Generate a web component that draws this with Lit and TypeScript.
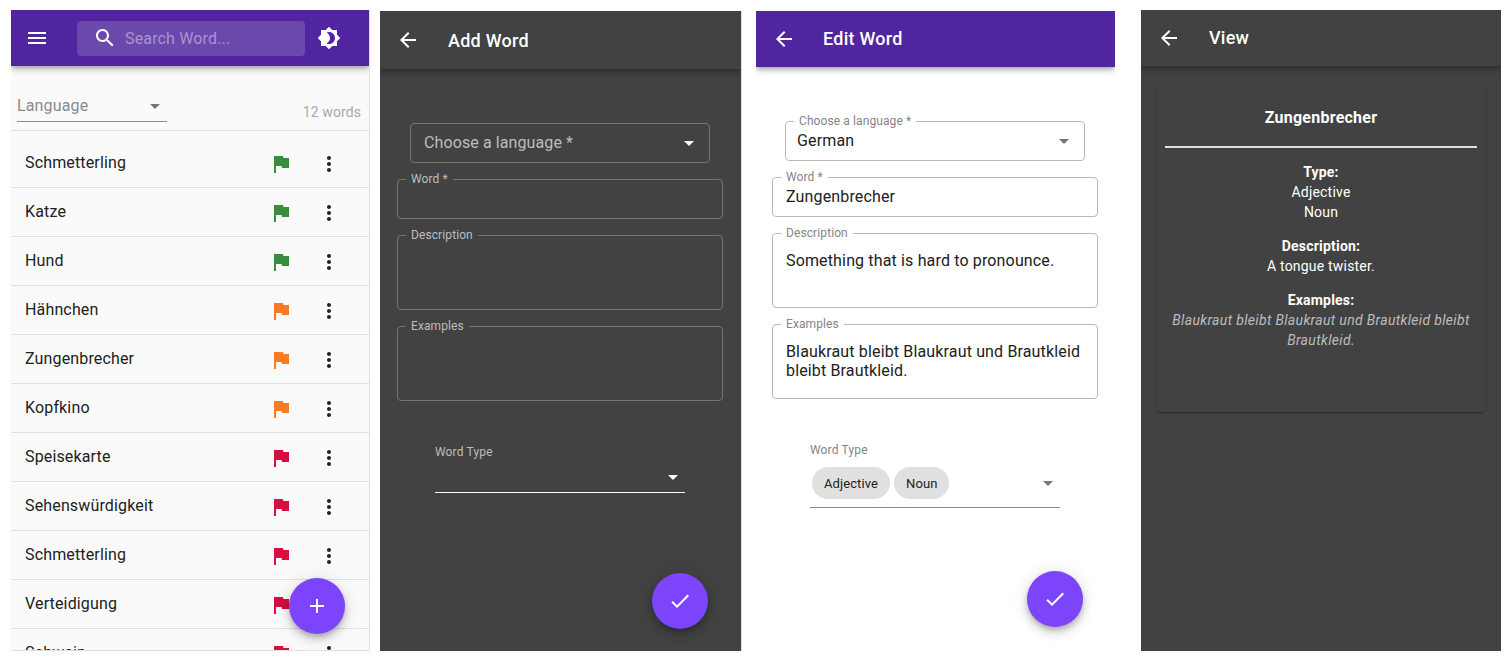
import { LitElement, html, css, svg } from 'lit';
import { customElement } from 'lit/decorators.js';

const icon = (d: unknown, cls = '') => html`<svg class="icon ${cls}" viewBox="0 0 24 24">${svg`<path d=${d as string}></path>`}</svg>`;

const MENU = 'M3 18h18v-2H3v2zm0-5h18v-2H3v2zm0-7v2h18V6H3z';
const SEARCH = 'M15.5 14h-.79l-.28-.27C15.41 12.59 16 11.11 16 9.5 16 5.91 13.09 3 9.5 3S3 5.91 3 9.5 5.91 16 9.5 16c1.61 0 3.09-.59 4.23-1.57l.27.28v.79l5 4.99L20.49 19l-4.99-5zm-6 0C7.01 14 5 11.99 5 9.5S7.01 5 9.5 5 14 7.01 14 9.5 11.99 14 9.5 14z';
const BRIGHTNESS = 'M20 8.69V4h-4.69L12 .69 8.69 4H4v4.69L.69 12 4 15.31V20h4.69L12 23.31 15.31 20H20v-4.69L23.31 12 20 8.69zM12 18c-.89 0-1.74-.2-2.5-.55C11.56 16.5 13 14.42 13 12s-1.44-4.5-3.5-5.45C10.26 6.2 11.11 6 12 6c3.31 0 6 2.69 6 6s-2.69 6-6 6z';
const BACK = 'M20 11H7.83l5.59-5.59L12 4l-8 8 8 8 1.41-1.41L7.83 13H20v-2z';
const FLAG = 'M14.4 6L14 4H5v17h2v-7h5.6l.4 2h7V6z';
const MORE = 'M12 8c1.1 0 2-.9 2-2s-.9-2-2-2-2 .9-2 2 .9 2 2 2zm0 2c-1.1 0-2 .9-2 2s.9 2 2 2 2-.9 2-2-.9-2-2-2zm0 6c-1.1 0-2 .9-2 2s.9 2 2 2 2-.9 2-2-.9-2-2-2z';
const CHECK = 'M9 16.17L4.83 12l-1.42 1.41L9 19 21 7l-1.41-1.41z';
const ADD = 'M19 13h-6v6h-2v-6H5v-2h6V5h2v6h6v2z';
const ARROW = 'M7 10l5 5 5-5z';

const WORDS: [string, string][] = [
  ['Schmetterling', 'green'],
  ['Katze', 'green'],
  ['Hund', 'green'],
  ['Hähnchen', 'orange'],
  ['Zungenbrecher', 'orange'],
  ['Kopfkino', 'orange'],
  ['Speisekarte', 'red'],
  ['Sehenswürdigkeit', 'red'],
  ['Schmetterling', 'red'],
  ['Verteidigung', 'red'],
  ['Schwein', 'red'],
];

@customElement('app-root')
export class AppRoot extends LitElement {
  static styles = css`
    :host {
      display: block;
      height: 660px;
      overflow: hidden;
      background: #fff;
      font-family: Roboto, sans-serif;
      color: #212121;
      letter-spacing: .15px;
    }
    .page {
      display: flex;
      align-items: flex-start;
      padding: 10px 0 0 11px;
    }
    .panel {
      position: relative;
      overflow: hidden;
      flex: none;
      height: 641px;
      --bg: #fff;
      background: var(--bg);
    }
    .dark {
      --bg: #424242;
      color: #fff;
    }
    .list-panel {
      width: 359px;
      --bg: #fafafa;
      border-right: 1px solid #e0e0e0;
      border-bottom: 1px solid #e0e0e0;
      box-sizing: border-box;
    }
    .add-panel {
      width: 362px;
      height: 640px;
      margin: 1px 0 0 10px;
      border-right: 1px solid #e0e0e0;
      box-sizing: border-box;
    }
    .edit-panel {
      width: 359px;
      height: 640px;
      margin: 1px 0 0 14px;
    }
    .view-panel {
      width: 360px;
      margin-left: 26px;
    }
    .icon {
      display: block;
      width: 24px;
      height: 24px;
      flex: none;
      fill: currentColor;
    }

    header {
      position: relative;
      display: flex;
      align-items: center;
      height: 56px;
      color: #fff;
      background: #50259f;
      box-shadow: 0 2px 4px -1px rgba(0, 0, 0, .2), 0 4px 5px 0 rgba(0, 0, 0, .14), 0 1px 10px 0 rgba(0, 0, 0, .12);
    }
    .dark header {
      background: #424242;
    }
    .add-panel header {
      height: 58px;
    }
    .back {
      margin-left: 16px;
    }
    .title {
      margin-left: 28px;
      font-size: 18px;
      font-weight: 500;
      letter-spacing: .25px;
    }
    .edit-panel .title {
      margin-left: 27px;
      padding-bottom: 2px;
    }
    .view-panel .title {
      padding-bottom: 2px;
    }

    .menu {
      margin-left: 14px;
    }
    .search {
      display: flex;
      align-items: center;
      width: 228px;
      height: 35px;
      margin-left: 28px;
      border-radius: 4px;
      background: #6b48ac;
      color: #a795cf;
      font-size: 16px;
    }
    .search .icon {
      margin: 0 8px 0 16px;
      color: #fff;
    }
    .theme {
      margin-left: 12px;
    }

    .filter {
      display: flex;
      justify-content: space-between;
      align-items: flex-end;
      height: 65px;
      padding: 0 8px 0 6px;
      border-bottom: 1px solid #e0e0e0;
      box-sizing: border-box;
    }
    .language {
      display: flex;
      justify-content: space-between;
      align-items: center;
      width: 150px;
      height: 32px;
      margin-bottom: 8px;
      border-bottom: 1px solid #8a8a8a;
      box-sizing: border-box;
      font-size: 16px;
      color: #8a8a8a;
    }
    .language .icon,
    .arrow {
      color: #757575;
    }
    .count {
      margin-bottom: 10px;
      font-size: 14px;
      letter-spacing: .1px;
      color: #a8a8a8;
    }
    .list {
      padding-top: 8px;
    }
    .row {
      display: flex;
      align-items: center;
      height: 48px;
      padding: 0 9px 0 14px;
      border-bottom: 1px solid #e0e0e0;
      font-size: 16px;
    }
    .word {
      flex: 1;
      padding-bottom: 2px;
    }
    .row .icon {
      margin-top: 1px;
    }
    .flag {
      margin-right: 24px;
    }
    .green {
      color: #388e3c;
    }
    .orange {
      color: #fb7a26;
    }
    .red {
      color: #d50f3e;
    }
    .more {
      margin-right: 19px;
    }

    .fab {
      position: absolute;
      display: flex;
      align-items: center;
      justify-content: center;
      width: 56px;
      height: 56px;
      border-radius: 50%;
      color: #fff;
      background: #7c44fb;
      box-shadow: 0 3px 5px -1px rgba(0, 0, 0, .2), 0 6px 10px 0 rgba(0, 0, 0, .14), 0 1px 18px 0 rgba(0, 0, 0, .12);
    }
    .list-panel .fab {
      left: 278px;
      top: 568px;
    }
    .add-panel .fab {
      left: 272px;
      top: 562px;
    }
    .edit-panel .fab {
      left: 271px;
      top: 560px;
    }

    .form {
      display: flex;
      flex-direction: column;
      align-items: flex-start;
      gap: 16px;
      padding: 54px 0 0 17px;
    }
    .edit-panel .form {
      padding-left: 16px;
    }
    .field {
      position: relative;
      box-sizing: border-box;
      width: 326px;
      height: 40px;
      padding: 9px 13px;
      border: 1px solid #b9b9b9;
      border-radius: 4px;
      font-size: 16px;
      line-height: 20px;
    }
    .dark .field {
      border-color: #757575;
    }
    .tall {
      height: 75px;
      padding-top: 17px;
      line-height: 19px;
    }
    .legend {
      position: absolute;
      left: 8px;
      top: -8px;
      padding: 0 5px;
      background: var(--bg);
      font-size: 12px;
      line-height: 14px;
      letter-spacing: .1px;
      color: #858585;
    }
    .dark .legend {
      color: #bdbdbd;
    }
    .select {
      display: flex;
      justify-content: space-between;
      align-items: center;
      width: 300px;
      margin-left: 13px;
      padding: 0 8px 0 13px;
    }
    .dark .select {
      color: #bdbdbd;
      letter-spacing: .1px;
    }
    .dark .select .icon {
      color: #fff;
    }
    .edit-panel .select {
      padding-left: 11px;
    }
    .type {
      width: 250px;
      margin: 28px 0 0 38px;
    }
    .type-label {
      font-size: 12px;
      line-height: 14px;
      color: #858585;
    }
    .dark .type-label {
      color: #bdbdbd;
    }
    .type-input {
      display: flex;
      align-items: center;
      gap: 4px;
      box-sizing: border-box;
      height: 34px;
      padding: 2px 0 0 2px;
      border-bottom: 1px solid #fff;
    }
    .edit-panel .type-input {
      height: 51px;
      padding: 10px 0 8px 2px;
      border-color: #8a8a8a;
    }
    .type-input .icon {
      margin-left: auto;
    }
    .dark .type-input .icon {
      color: #fff;
    }
    .chip {
      display: flex;
      align-items: center;
      height: 32px;
      padding: 0 12px;
      border-radius: 16px;
      background: #e0e0e0;
      font-size: 13px;
      letter-spacing: .1px;
    }

    .card {
      height: 329px;
      margin: 17px 16px 0;
      padding: 0 8px;
      box-sizing: border-box;
      border-radius: 4px;
      text-align: center;
      font-size: 14px;
      line-height: 20px;
      letter-spacing: .2px;
      box-shadow: 0 2px 1px -1px rgba(0, 0, 0, .2), 0 1px 1px 0 rgba(0, 0, 0, .14), 0 1px 3px 0 rgba(0, 0, 0, .12);
    }
    .card h2 {
      margin: 0;
      padding: 24px 0 18px;
      border-bottom: 2px solid #e0e0e0;
      font-size: 16px;
      line-height: 21px;
      font-weight: 700;
      letter-spacing: .25px;
    }
    .section {
      margin-top: 14px;
    }
    .section b {
      display: block;
      font-weight: 700;
    }
    .section em {
      color: #bdbdbd;
      letter-spacing: .33px;
    }
  `;

  private header(title: string) {
    return html`<header>${icon(BACK, 'back')}<span class="title">${title}</span></header>`;
  }

  private fab(d: string) {
    return html`<div class="fab">${icon(d)}</div>`;
  }

  private listPanel() {
    return html`
      <section class="panel list-panel">
        <header>
          ${icon(MENU, 'menu')}
          <div class="search">${icon(SEARCH)}Search Word...</div>
          ${icon(BRIGHTNESS, 'theme')}
        </header>
        <div class="filter">
          <div class="language">Language ${icon(ARROW)}</div>
          <div class="count">12 words</div>
        </div>
        <div class="list">
          ${WORDS.map(
            ([word, level]) => html`
              <div class="row">
                <span class="word">${word}</span>
                ${icon(FLAG, `flag ${level}`)} ${icon(MORE, 'more')}
              </div>
            `,
          )}
        </div>
        ${this.fab(ADD)}
      </section>
    `;
  }

  private addPanel() {
    return html`
      <section class="panel add-panel dark">
        ${this.header('Add Word')}
        <div class="form">
          <div class="field select">Choose a language * ${icon(ARROW, 'arrow')}</div>
          <div class="field"><span class="legend">Word *</span></div>
          <div class="field tall"><span class="legend">Description</span></div>
          <div class="field tall"><span class="legend">Examples</span></div>
          <div class="type">
            <div class="type-label">Word Type</div>
            <div class="type-input">${icon(ARROW, 'arrow')}</div>
          </div>
        </div>
        ${this.fab(CHECK)}
      </section>
    `;
  }

  private editPanel() {
    return html`
      <section class="panel edit-panel">
        ${this.header('Edit Word')}
        <div class="form">
          <div class="field select">
            <span class="legend">Choose a language *</span>German ${icon(ARROW, 'arrow')}
          </div>
          <div class="field"><span class="legend">Word *</span>Zungenbrecher</div>
          <div class="field tall"><span class="legend">Description</span>Something that is hard to pronounce.</div>
          <div class="field tall">
            <span class="legend">Examples</span>Blaukraut bleibt Blaukraut und Brautkleid bleibt Brautkleid.
          </div>
          <div class="type">
            <div class="type-label">Word Type</div>
            <div class="type-input">
              <span class="chip">Adjective</span><span class="chip">Noun</span>${icon(ARROW, 'arrow')}
            </div>
          </div>
        </div>
        ${this.fab(CHECK)}
      </section>
    `;
  }

  private viewPanel() {
    return html`
      <section class="panel view-panel dark">
        ${this.header('View')}
        <div class="card">
          <h2>Zungenbrecher</h2>
          <div class="section"><b>Type:</b>Adjective<br />Noun</div>
          <div class="section"><b>Description:</b>A tongue twister.</div>
          <div class="section">
            <b>Examples:</b><em>Blaukraut bleibt Blaukraut und Brautkleid bleibt Brautkleid.</em>
          </div>
        </div>
      </section>
    `;
  }

  render() {
    return html`
      <div class="page">${this.listPanel()} ${this.addPanel()} ${this.editPanel()} ${this.viewPanel()}</div>
    `;
  }
}
